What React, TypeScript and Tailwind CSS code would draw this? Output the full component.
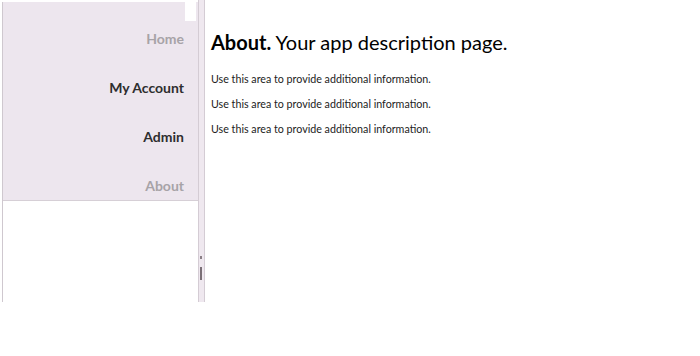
const navItems = [
  { label: "Home", active: false },
  { label: "My Account", active: true },
  { label: "Admin", active: true },
  { label: "About", active: false },
];

const lines = [
  "Use this area to provide additional information.",
  "Use this area to provide additional information.",
  "Use this area to provide additional information.",
];

export default function App() {
  return (
    <div
      className="flex h-[356px] w-[700px] overflow-hidden bg-white"
      style={{ fontFamily: 'Lato, "Open Sans", sans-serif' }}
    >
      {/* side panel */}
      <div className="flex h-[302px] pl-[2px] pt-[2px]">
        <div className="flex w-[196px] flex-col border-l border-[#cfc8cf]">
          <div className="relative h-[199px] border-b border-[#d6cfd6] bg-[#ede6ee]">
            <div className="absolute right-[2px] top-0 h-[19px] w-[11px] bg-white" />
            <nav className="flex flex-col items-end pr-[14px] pt-[27px]">
              {navItems.map((item) => (
                <a
                  key={item.label}
                  className={
                    "h-[49px] text-[14px] font-bold leading-[20px] " +
                    (item.active ? "text-[#2e2e2e]" : "text-[#a7a3a7]")
                  }
                >
                  {item.label}
                </a>
              ))}
            </nav>
          </div>
          <div className="flex-1 bg-white" />
        </div>
        {/* scroll strip */}
        <div className="relative -mt-[2px] w-[7px] border-x border-[#d4ccd4] bg-[#efe8ef]">
          <div className="absolute left-[1px] top-[256px] h-[3px] w-[2px] bg-[#8a7f86]" />
          <div className="absolute left-[1px] top-[267px] h-[13px] w-[2px] bg-[#7a6f76]" />
        </div>
      </div>

      {/* content */}
      <main className="pl-[6px] pt-[29px]">
        <h1 className="text-[20px] leading-[26px] text-black">
          <span className="font-bold">About.</span> Your app description page.
        </h1>
        <div className="mt-[16px] flex flex-col gap-[10px]">
          {lines.map((line, i) => (
            <p key={i} className="text-[10.7px] leading-[15px] text-[#222]">
              {line}
            </p>
          ))}
        </div>
      </main>
    </div>
  );
}
